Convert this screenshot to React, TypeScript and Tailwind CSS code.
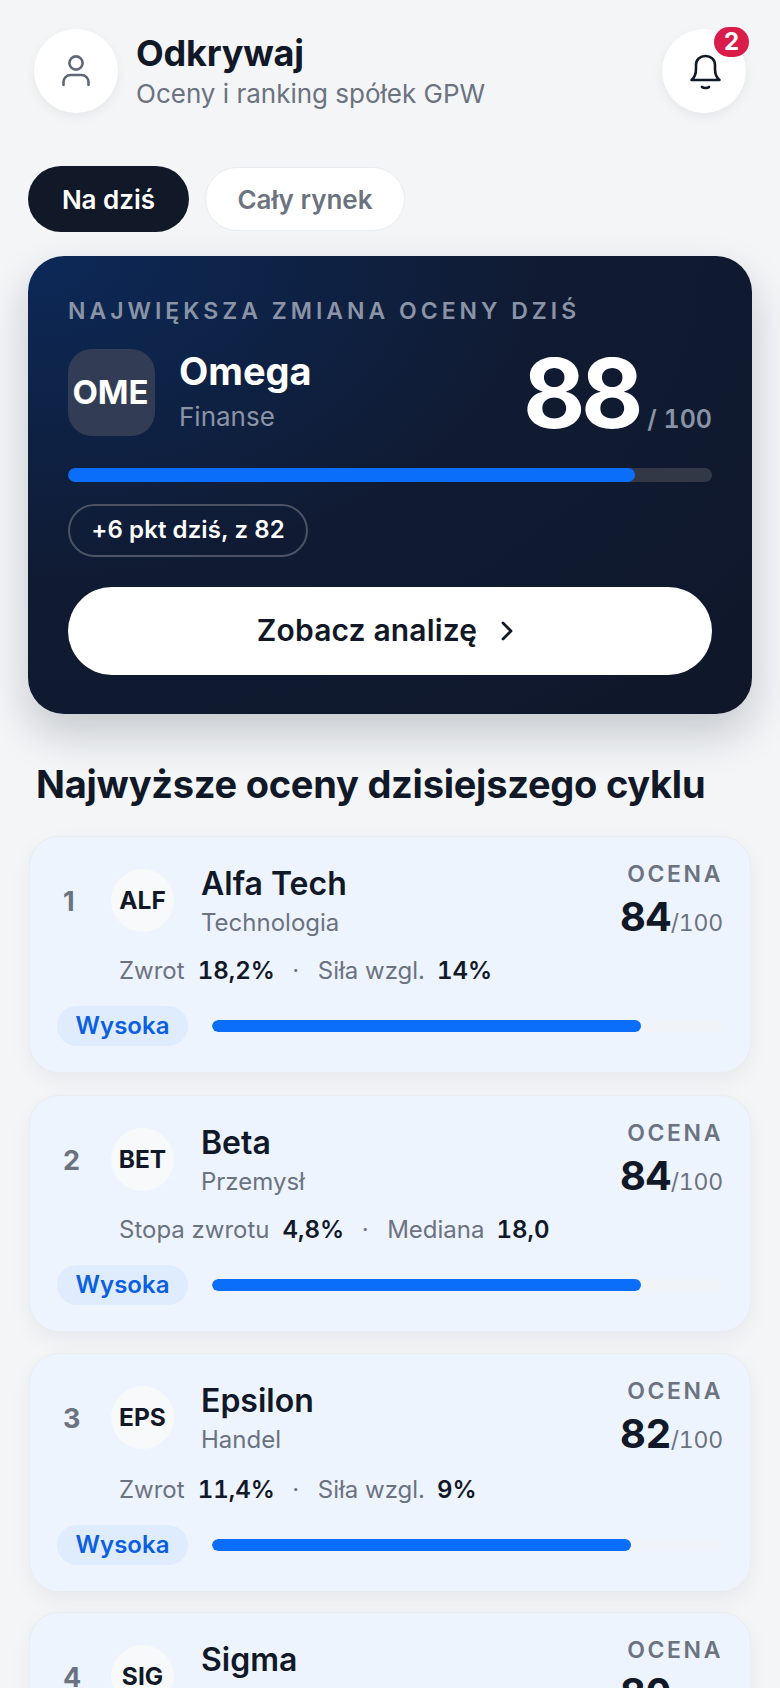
import React from "react";

type Row = { rank: number; code: string; name: string; sector: string; score: number; a: string; av: string; b: string; bv: string; pct: string; tall?: boolean };

const rows: Row[] = [
  { rank: 1, code: "ALF", name: "Alfa Tech", sector: "Technologia", score: 84, a: "Zwrot", av: "18,2%", b: "Siła wzgl.", bv: "14%", pct: "84%" },
  { rank: 2, code: "BET", name: "Beta", sector: "Przemysł", score: 84, a: "Stopa zwrotu", av: "4,8%", b: "Mediana", bv: "18,0", pct: "84%" },
  { rank: 3, code: "EPS", name: "Epsilon", sector: "Handel", score: 82, a: "Zwrot", av: "11,4%", b: "Siła wzgl.", bv: "9%", pct: "82%", tall: true },
  { rank: 4, code: "SIG", name: "Sigma", sector: "Energia", score: 80, a: "Zwrot", av: "9,1%", b: "Siła wzgl.", bv: "7%", pct: "80%" },
];

function Card({ r }: { r: Row }) {
  return (
    <div className={`shrink-0 rounded-[30px] border border-[#e9edf2] bg-[#edf4fe] px-[27px] pt-[23px] pb-[26px] shadow-[0_8px_22px_rgba(15,23,42,0.05)] ${r.tall ? "mb-[-2px]" : ""}`}>
      <div className="flex items-start">
        <div className="w-[54px] pl-[6px] pt-[26px] text-[27px] leading-[32px] font-bold text-[#6b7280]">{r.rank}</div>
        <div className="mt-[9px] flex h-[63px] w-[63px] shrink-0 items-center justify-center rounded-full bg-[#f8f9fb] text-[24.5px] font-bold text-[#111827]">{r.code}</div>
        <div className="ml-[27px] flex-1">
          <div className="pt-[4px] text-[32px] leading-[40px] font-semibold text-[#111827]">{r.name}</div>
          <div className="mt-[3px] text-[24px] leading-[32px] text-[#6b7280]">{r.sector}</div>
        </div>
        <div className="flex flex-col items-end">
          <div className="text-[23px] leading-[28px] font-semibold tracking-[2.6px] text-[#6b7280]">OCENA</div>
          <div className="mt-[5px] flex items-baseline">
            <span className="text-[40px] leading-[48px] font-bold tracking-[-0.5px] text-[#111827] tabular-nums">{r.score}</span>
            <span className="text-[23px] tracking-[-0.2px] text-[#6b7280] tabular-nums">/100</span>
          </div>
        </div>
      </div>
      <div className={`${r.tall ? "mt-[16px]" : "mt-[14px]"} flex items-center pl-[62px] text-[24px] leading-[32px] text-[#6b7280]`}>
        <span>{r.a}</span>
        <span className="ml-[13px] font-semibold text-[#111827] tabular-nums">{r.av}</span>
        <span className="ml-[9px] w-[24px] text-center">·</span>
        <span className="ml-[10px]">{r.b}</span>
        <span className="ml-[12px] font-semibold text-[#111827] tabular-nums">{r.bv}</span>
      </div>
      <div className="mt-[19px] flex items-center">
        <div className="flex h-[40px] w-[131px] shrink-0 items-center justify-center rounded-full bg-[#dfecfe] text-[24px] font-semibold text-[#0b5fe0]">Wysoka</div>
        <div className="ml-[24px] h-[12px] flex-1 overflow-hidden rounded-full bg-[#f0f3f7]">
          <div className="h-full rounded-full bg-[#0a6efa]" style={{ width: r.pct }} />
        </div>
      </div>
    </div>
  );
}

export default function App() {
  return (
    <div className="h-[1688px] overflow-hidden bg-[#f3f5f7] font-['Inter',sans-serif]">
      <header className="flex items-center justify-between pl-[34px] pr-[34px] pt-[29px]">
        <div className="flex items-center">
          <div className="flex h-[84px] w-[84px] items-center justify-center rounded-full bg-white shadow-[0_4px_12px_rgba(15,23,42,0.06)]">
            <svg width="30" height="34" viewBox="0 0 30 34" fill="none" stroke="#5f6878" strokeWidth="2.6" strokeLinecap="round">
              <circle cx="15" cy="9" r="6.6" />
              <path d="M2.5 31v-3a7 7 0 0 1 7-7h11a7 7 0 0 1 7 7v3" />
            </svg>
          </div>
          <div className="ml-[18px]">
            <div className="text-[36px] leading-[42px] font-bold tracking-[-0.2px] text-[#111827]">Odkrywaj</div>
            <div className="mt-[3px] text-[26px] leading-[34px] text-[#6b7280]">Oceny i ranking spółek GPW</div>
          </div>
        </div>
        <div className="relative flex h-[84px] w-[84px] items-center justify-center rounded-full bg-white shadow-[0_4px_12px_rgba(15,23,42,0.06)]">
          <svg className="ml-[3px] mt-[2px]" width="33" height="36" viewBox="0 0 33 36" fill="none" stroke="#111827" strokeWidth="2.6" strokeLinecap="round" strokeLinejoin="round">
            <path d="M2.5 26C5 24 7 21 7 15V11C7 5.5 11 2 16.5 2C22 2 26 5.5 26 11V15C26 21 28 24 30.5 26Z" />
            <path d="M13 33c1.5 1.4 5.5 1.4 7 0" />
          </svg>
          <div className="absolute left-[52px] top-[-2px] flex h-[30px] w-[35px] items-center justify-center rounded-full bg-[#d91c4a] text-[24px] font-bold text-white">2</div>
        </div>
      </header>

      <div className="mt-[53px] flex gap-[16px] pl-[28px]">
        <div className="flex h-[66px] w-[161px] items-center justify-center rounded-full bg-[#111827] text-[26px] font-semibold text-white">Na dziś</div>
        <div className="flex h-[64px] w-[200px] items-center justify-center self-center rounded-full border border-[#e9ecf0] bg-white text-[26px] font-semibold text-[#6b7280]">Cały rynek</div>
      </div>

      <section className="mx-[28px] mt-[24px] h-[458px] rounded-[36px] bg-[radial-gradient(ellipse_at_top_left,#0c2958_0%,#101b33_50%,#0f1729_100%)] px-[40px] pt-[40px] shadow-[0_20px_44px_rgba(15,23,42,0.2)]">
        <div className="text-[23px] leading-[30px] font-semibold tracking-[4px] text-[#8a94a6]">NAJWIĘKSZA ZMIANA OCENY DZIŚ</div>
        <div className="mt-[23px] flex">
          <div className="flex h-[87px] w-[87px] items-center justify-center rounded-[24px] bg-[#323d55] pr-[2px] text-[33px] font-bold text-white">OME</div>
          <div className="ml-[24px] flex-1">
            <div className="text-[38px] leading-[44px] font-bold text-white">Omega</div>
            <div className="mt-[6px] text-[26px] leading-[36px] text-[#8a94a6]">Finanse</div>
          </div>
          <div className="flex items-baseline">
            <span className="text-[96px] leading-[88px] font-bold tracking-[-4px] text-white tabular-nums">88</span>
            <span className="ml-[8px] text-[25px] font-semibold text-[#8a94a6] tabular-nums">/ 100</span>
          </div>
        </div>
        <div className="mt-[29px] h-[14px] overflow-hidden rounded-full bg-[#323846]">
          <div className="h-full w-[88%] rounded-full bg-[#0a6efa]" />
        </div>
        <div className="mt-[22px] flex h-[53px] w-[240px] items-center justify-center rounded-full border-2 border-[#4b5365] text-[24px] font-semibold tracking-[0.1px] text-white">+6 pkt dziś, z 82</div>
        <div className="mt-[30px] flex h-[88px] items-center justify-center gap-[24px] rounded-full bg-white text-[30px] font-semibold tracking-[0.15px] text-[#111827]">
          <span>Zobacz analizę</span>
          <svg width="22" height="20" viewBox="0 0 22 20" fill="none" stroke="#111827" strokeWidth="2.8" strokeLinecap="round" strokeLinejoin="round">
            <path d="M2 2l8 8-8 8" />
          </svg>
        </div>
      </section>

      <h2 className="mt-[48px] pl-[36px] text-[38px] leading-[44px] font-bold tracking-[-0.25px] text-[#111827]">Najwyższe oceny dzisiejszego cyklu</h2>

      <div className="mx-[29px] mt-[30px] flex flex-col gap-[21.5px]">
        {rows.map((r) => <Card key={r.rank} r={r} />)}
      </div>
    </div>
  );
}
